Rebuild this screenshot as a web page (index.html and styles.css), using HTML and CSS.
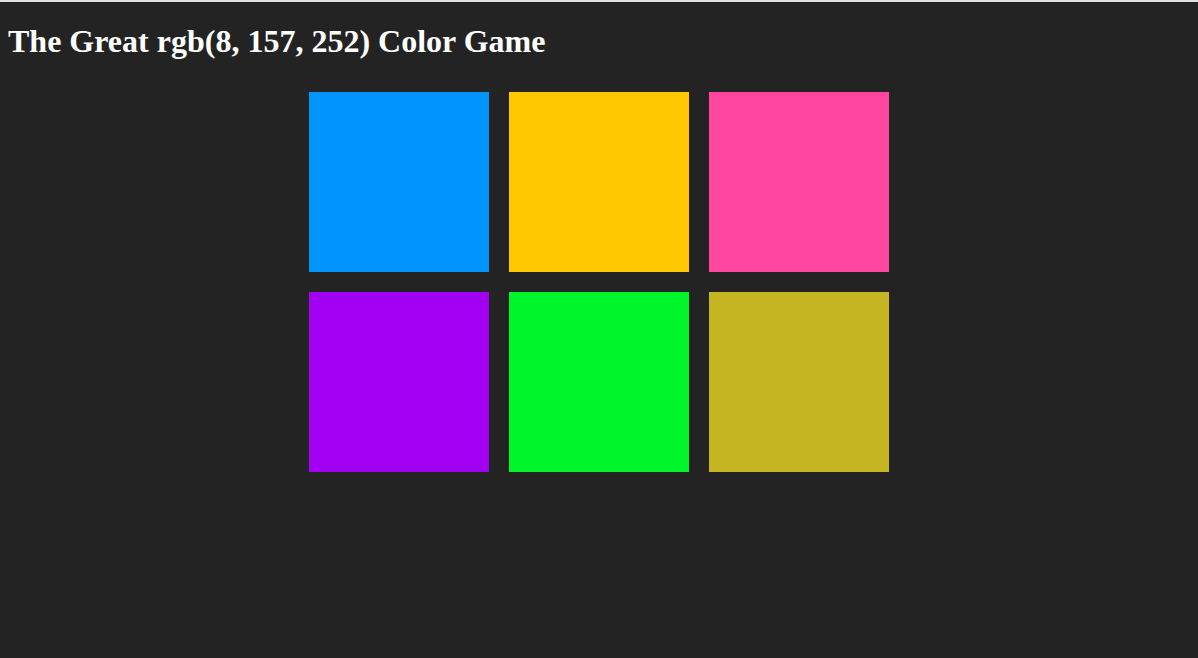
FILE: index.html
```html
<!DOCTYPE html>
<html lang="en">
<head>
<meta charset="utf-8">
<title>Color Game</title>
<link rel="stylesheet" href="styles.css">
</head>
<body class="page">
  <h1 class="title">The Great <span class="color-display">rgb(8, 157, 252)</span> Color Game</h1>
  <div class="container">
    <div class="square sq-blue"></div>
    <div class="square sq-yellow"></div>
    <div class="square sq-pink"></div>
    <div class="square sq-purple"></div>
    <div class="square sq-green"></div>
    <div class="square sq-olive"></div>
  </div>
</body>
</html>
```

FILE: styles.css
```css
.page {
  margin: 0;
  padding: 0 8px;
  min-height: 656px;
  box-sizing: border-box;
  background: #232323;
  border-top: 2px solid #e2e2e2;
  font-family: "Liberation Serif", "Times New Roman", serif;
}

.title {
  color: #ffffff;
  font-size: 32px;
  font-weight: bold;
  margin: 21.44px 0;
}

.container {
  width: 600px;
  margin: 0 auto;
  display: flex;
  flex-wrap: wrap;
}

.square {
  width: 180px;
  height: 180px;
  margin: 10px;
}

.sq-blue { background: #0094ff; }
.sq-yellow { background: #ffc800; }
.sq-pink { background: #ff47a0; }
.sq-purple { background: #a200f2; }
.sq-green { background: #00f52a; }
.sq-olive { background: #c6b522; }
```
